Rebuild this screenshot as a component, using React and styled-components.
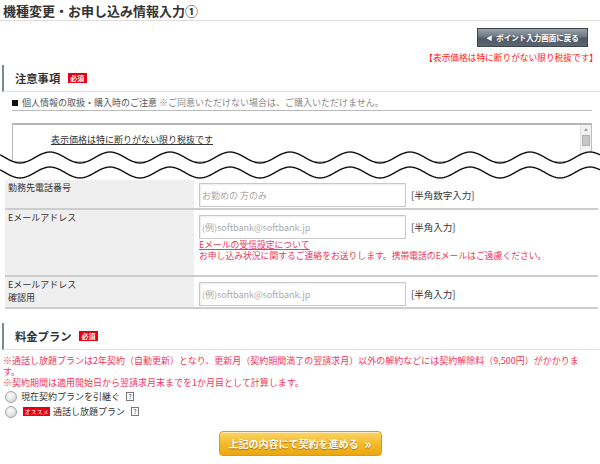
import React from 'react'
import styled, { createGlobalStyle } from 'styled-components'

const GlobalStyle = createGlobalStyle`
    body {
        margin: 0;
        background: #fff;
        font-family: "Noto Sans CJK JP", "Noto Sans", sans-serif;
        color: #333;
    }
`

const Page = styled.div`
    width: 600px;
`

const Title = styled.h1`
    margin: 0;
    height: 19px;
    padding: 1px 0 0 3px;
    border-bottom: 1px solid #ddd;
    font-size: 13px;
    font-weight: bold;
    line-height: 19px;
    color: #333;
`

const TopActions = styled.div`
    display: flex;
    flex-direction: column;
    align-items: flex-end;
    padding-right: 2px;
`

const BackButton = styled.button`
    margin: 7px 10px 0 0;
    width: 111px;
    height: 19px;
    padding: 0;
    box-sizing: border-box;
    display: flex;
    align-items: center;
    justify-content: center;
    gap: 4px;
    border: 1px solid #3d4650;
    background: linear-gradient(#9aa3ac 0%, #6c7782 45%, #4d5863 55%, #5b6670 100%);
    color: #fff;
    font-family: inherit;
    font-size: 7.5px;
    font-weight: bold;
    line-height: 1;
    cursor: pointer;
`

const Tri = styled.span`
    font-size: 6px;
`

const TaxNote = styled.p`
    margin: 6px 0 0;
    font-size: 8.7px;
    line-height: 10px;
    color: #ff2020;
`

const SectionHeader = styled.h2`
    margin: ${({ $top }) => $top}px 0 0 2px;
    height: 26px;
    padding-left: 11px;
    border-left: 2px solid #7c8894;
    border-bottom: 1px solid #ddd;
    display: flex;
    align-items: center;
    gap: 7.5px;
    font-size: 11.3px;
    font-weight: bold;
    color: #333;
`

const Required = styled.span`
    display: inline-block;
    height: 10px;
    padding: 0 2.5px;
    background: #e60012;
    color: #fff;
    font-size: 7px;
    font-weight: bold;
    line-height: 10px;
`

const NoticeRow = styled.div`
    margin: 4px 8px 0 12px;
    display: flex;
    align-items: center;
    gap: 4px;
    border-bottom: 1px solid #bbb;
    font-size: 9px;
    line-height: 14px;
    color: #555;
`

const Square = styled.span`
    width: 6px;
    height: 6px;
    background: #111;
`

const Muted = styled.span`
    color: #888;
`

const TermsBox = styled.div`
    margin: 12px 0 0 12px;
    width: 580px;
    height: 39px;
    box-sizing: border-box;
    border: 1px solid #bbb;
    border-top: 2px solid #b5b5b5;
    display: flex;
    overflow: hidden;
`

const TermsLink = styled.a`
    padding: 9px 0 0 38px;
    font-size: 9px;
    line-height: 12px;
    color: #333;
    text-decoration: underline;
`

const ScrollTrack = styled.div`
    margin-left: auto;
    width: 10px;
    background: #f2f2f2;
    border-left: 1px solid #e2e2e2;
    display: flex;
    flex-direction: column;
    align-items: center;
    padding-top: 3px;
    gap: 4px;
`

const ScrollArrow = styled.span`
    width: 0;
    height: 0;
    border-left: 2.5px solid transparent;
    border-right: 2.5px solid transparent;
    border-bottom: 3px solid #a0a0a0;
`

const ScrollThumb = styled.span`
    width: 8px;
    height: 11px;
    background: #c6c6c6;
    border: 1px solid #b0b0b0;
    box-sizing: border-box;
`

const Wave = styled.svg`
    display: block;
    position: relative;
    z-index: 1;
    margin-top: -12px;
`

const Table = styled.div`
    margin-left: 5px;
    width: 593px;
`

const Row = styled.div`
    display: grid;
    grid-template-columns: 189px 1fr;
    border-bottom: 2px solid #cdcdcd;
`

const Label = styled.div`
    background: #efefef;
    padding: 1px 3px;
    font-size: 9px;
    line-height: 13px;
    color: #333;
`

const Value = styled.div`
    padding: ${({ $pt }) => $pt}px 5px ${({ $pb }) => $pb}px;
`

const InputLine = styled.div`
    display: flex;
    align-items: center;
    gap: 5px;
`

const Field = styled.input`
    width: 207px;
    height: 24px;
    box-sizing: border-box;
    margin: 0;
    padding: 0 2px;
    border: 1px solid #c9c9c9;
    border-radius: 0;
    box-shadow: inset 1px 1px 2px rgba(0, 0, 0, 0.08);
    font-family: inherit;
    font-size: 9px;
    outline: none;
    &::placeholder {
        color: #aaa;
    }
`

const Hint = styled.span`
    font-size: 9.5px;
    color: #333;
`

const PinkLink = styled.a`
    display: block;
    font-size: 8.8px;
    line-height: 11px;
    color: #f0365a;
    text-decoration: underline;
`

const PinkText = styled.p`
    margin: 0;
    font-size: 8.8px;
    line-height: 11px;
    color: #f0365a;
`

const PlanNotes = styled.p`
    margin: 5px 0 0;
    padding-left: 3px;
    font-size: 9px;
    line-height: 11px;
    color: #f0365a;
`

const Options = styled.div`
    margin-top: 1px;
`

const Option = styled.label`
    height: 15px;
    padding-left: 5px;
    display: flex;
    align-items: center;
    gap: 3px;
    font-size: 9px;
    color: #333;
`

const Radio = styled.input`
    appearance: none;
    margin: 0 1px 0 0;
    width: 12px;
    height: 12px;
    border-radius: 50%;
    border: 1px solid #a5a5a5;
    background: radial-gradient(circle at 40% 35%, #fdfdfd 0%, #e4e4e4 55%, #c8c8c8 100%);
`

const Recommend = styled.span`
    margin-left: 2px;
    width: 27px;
    height: 9px;
    background: #e60012;
    color: #fff;
    font-size: 6px;
    line-height: 9px;
    text-align: center;
`

const Help = styled.span`
    margin-left: 3px;
    width: 8px;
    height: 9px;
    box-sizing: border-box;
    border: 1px solid #777;
    font-size: 6.5px;
    line-height: 7px;
    text-align: center;
    color: #444;
`

const Submit = styled.button`
    display: flex;
    align-items: center;
    justify-content: center;
    gap: 6px;
    margin: 12px auto 0;
    width: 163px;
    height: 25px;
    padding: 0;
    border: 1px solid #dc9a10;
    border-radius: 4px;
    background: linear-gradient(#fbd466 0%, #f4bb2c 50%, #eaa70e 100%);
    box-shadow: inset 0 1px 0 rgba(255, 255, 255, 0.6), 0 1px 1px rgba(0, 0, 0, 0.15);
    color: #fff;
    font-family: inherit;
    font-size: 10px;
    font-weight: bold;
    text-shadow: 0 1px 1px rgba(140, 80, 0, 0.7);
    cursor: pointer;
`

const Chevron = styled.span`
    font-size: 13px;
    line-height: 1;
`

function wavePath(cy, amp) {
    let d = ''
    for (let x = 0; x <= 600; x += 2) {
        const y = cy + amp * Math.cos((2 * Math.PI * (x - 20)) / 60)
        d += (x === 0 ? 'M' : 'L') + x + ' ' + y.toFixed(2) + ' '
    }
    return d
}

const topWave = wavePath(7.5, 5.5)
const bottomWave = wavePath(22.5, 5.5)

function App() {
    return (
        <Page>
            <GlobalStyle />
            <Title>機種変更・お申し込み情報入力①</Title>
            <TopActions>
                <BackButton><Tri>◀</Tri>ポイント入力画面に戻る</BackButton>
                <TaxNote>【表示価格は特に断りがない限り税抜です】</TaxNote>
            </TopActions>

            <SectionHeader $top={2}>注意事項<Required>必須</Required></SectionHeader>
            <NoticeRow>
                <Square />
                <span>個人情報の取扱・購入時のご注意 <Muted>※ご同意いただけない場合は、ご購入いただけません。</Muted></span>
            </NoticeRow>
            <TermsBox>
                <TermsLink>表示価格は特に断りがない限り税抜です</TermsLink>
                <ScrollTrack>
                    <ScrollArrow />
                    <ScrollThumb />
                </ScrollTrack>
            </TermsBox>
            <Wave width="600" height="30" viewBox="0 0 600 30">
                <path d={topWave + 'L600 30 L0 30 Z'} fill="#fff" />
                <path d={topWave} fill="none" stroke="#111" strokeWidth="1.4" />
                <path d={bottomWave} fill="none" stroke="#111" strokeWidth="1.4" />
            </Wave>

            <Table>
                <Row>
                    <Label>勤務先電話番号</Label>
                    <Value $pt={3} $pb={1}>
                        <InputLine>
                            <Field placeholder="お勤めの 方のみ" />
                            <Hint>[半角数字入力]</Hint>
                        </InputLine>
                    </Value>
                </Row>
                <Row>
                    <Label>Eメールアドレス</Label>
                    <Value $pt={5} $pb={14}>
                        <InputLine>
                            <Field placeholder="(例)softbank@softbank.jp" />
                            <Hint>[半角入力]</Hint>
                        </InputLine>
                        <PinkLink>Eメールの受信設定について</PinkLink>
                        <PinkText>お申し込み状況に関するご連絡をお送りします。携帯電話のEメールはご遠慮ください。</PinkText>
                    </Value>
                </Row>
                <Row>
                    <Label>Eメールアドレス<br />確認用</Label>
                    <Value $pt={5} $pb={1}>
                        <InputLine>
                            <Field placeholder="(例)softbank@softbank.jp" />
                            <Hint>[半角入力]</Hint>
                        </InputLine>
                    </Value>
                </Row>
            </Table>

            <SectionHeader $top={14}>料金プラン<Required>必須</Required></SectionHeader>
            <PlanNotes>
                ※通話し放題プランは2年契約（自動更新）となり、更新月（契約期間満了の翌請求月）以外の解約などには契約解除料（9,500円）がかかりま<br />
                す。<br />
                ※契約期間は適用開始日から翌請求月末までを1か月目として計算します。
            </PlanNotes>
            <Options>
                <Option>
                    <Radio type="radio" name="plan" />
                    現在契約プランを引継ぐ
                    <Help>?</Help>
                </Option>
                <Option>
                    <Radio type="radio" name="plan" />
                    <Recommend>オススメ</Recommend>
                    通話し放題プラン
                    <Help>?</Help>
                </Option>
            </Options>

            <Submit>上記の内容にて契約を進める<Chevron>»</Chevron></Submit>
        </Page>
    )
}

export default App
